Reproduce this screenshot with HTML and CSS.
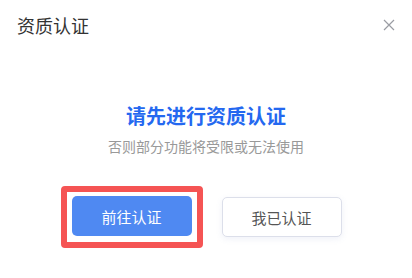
FILE: index.html
```html
<!DOCTYPE html>
<html lang="zh-CN">
<head>
<meta charset="utf-8">
<link rel="stylesheet" href="styles.css">
</head>
<body>
<div class="dialog">
  <div class="header">
    <span class="title">资质认证</span>
    <svg class="close" width="12" height="12" viewBox="0 0 12 12"><path d="M1 1L11 11M11 1L1 11" stroke="#9a9ca3" stroke-width="1.2" fill="none"/></svg>
  </div>
  <div class="content">
    <div class="heading">请先进行资质认证</div>
    <div class="sub">否则部分功能将受限或无法使用</div>
    <div class="actions">
      <div class="highlight-wrap">
        <button class="btn primary">前往认证</button>
        <span class="highlight"></span>
      </div>
      <button class="btn plain">我已认证</button>
    </div>
  </div>
</div>
</body>
</html>
```

FILE: styles.css
```css
html, body {
  margin: 0;
  padding: 0;
  background: #fff;
}
body {
  font-family: "Noto Sans CJK SC", "Noto Sans", sans-serif;
  width: 412px;
  height: 278px;
  overflow: hidden;
}
.header {
  display: flex;
  justify-content: space-between;
  align-items: center;
  padding: 11px 17px 0 17px;
  height: 28px;
}
.title {
  font-size: 18px;
  line-height: 24px;
  color: #333;
}
.close {
  margin-right: 0;
  margin-top: 0;
}
.content {
  display: flex;
  flex-direction: column;
  align-items: center;
  padding-top: 63px;
}
.heading {
  font-size: 20px;
  line-height: 28px;
  font-weight: bold;
  color: #2468f0;
}
.sub {
  margin-top: 6px;
  font-size: 14px;
  line-height: 20px;
  color: #999;
}
.actions {
  display: flex;
  gap: 30px;
  margin-top: 40px;
  padding-left: 1px;
}
.highlight-wrap {
  position: relative;
}
.btn {
  width: 120px;
  height: 40px;
  border-radius: 5px;
  font-family: inherit;
  font-size: 15px;
  cursor: pointer;
  padding: 0;
}
.primary {
  background: #4f89f2;
  color: #fff;
  border: none;
}
.plain {
  background: #fff;
  color: #555;
  border: 1px solid #dcdfea;
  box-shadow: 0 2px 6px rgba(120, 140, 200, 0.12);
  margin-top: 1px;
}
.highlight {
  position: absolute;
  left: -11px;
  right: -11px;
  top: -10px;
  bottom: -11px;
  border: 6px solid #f55454;
  border-radius: 4px;
  pointer-events: none;
}
```
